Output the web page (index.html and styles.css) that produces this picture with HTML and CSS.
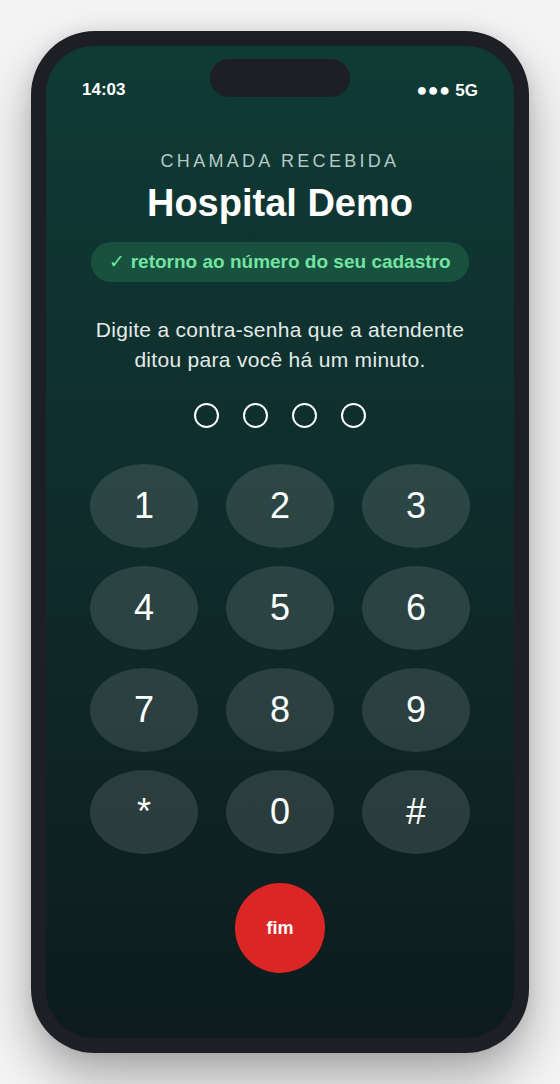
FILE: index.html
```html
<!DOCTYPE html>
<html lang="pt-BR">
<head>
<meta charset="UTF-8">
<meta name="viewport" content="width=device-width, initial-scale=1.0">
<title>Chamada recebida</title>
<link rel="stylesheet" href="styles.css">
</head>
<body>

<div class="phone">
  <div class="screen">
    <div class="island"></div>

    <div class="status-bar">
      <span class="clock">14:03</span>
      <span class="signal"><span class="signal-dots">&#9679;&#9679;&#9679;</span> 5G</span>
    </div>

    <div class="caller">
      <div class="caller-label">CHAMADA RECEBIDA</div>
      <h1 class="caller-name">Hospital Demo</h1>
      <div class="badge"><span class="check">&#10003;</span> retorno ao número do seu cadastro</div>
    </div>

    <p class="prompt">Digite a contra-senha que a atendente ditou para você há um minuto.</p>

    <div class="pin-dots">
      <span class="dot"></span>
      <span class="dot"></span>
      <span class="dot"></span>
      <span class="dot"></span>
    </div>

    <div class="keypad">
      <button class="key">1</button>
      <button class="key">2</button>
      <button class="key">3</button>
      <button class="key">4</button>
      <button class="key">5</button>
      <button class="key">6</button>
      <button class="key">7</button>
      <button class="key">8</button>
      <button class="key">9</button>
      <button class="key">*</button>
      <button class="key">0</button>
      <button class="key">#</button>
    </div>

    <button class="end-call">fim</button>
  </div>
</div>

</body>
</html>
```

FILE: styles.css
```css
html {
  background-color: #f4f4f4;
}

body {
  margin: 0;
  padding: 31px 0;
  background-color: #f4f4f4;
  font-family: "Liberation Sans", Arial, sans-serif;
}

.phone {
  width: 498px;
  height: 1022px;
  margin: 0 auto;
  padding: 15px;
  box-sizing: border-box;
  background-color: #1d1f24;
  border-radius: 64px;
  box-shadow: 0 24px 50px rgba(0, 0, 0, 0.32), 0 0 16px rgba(0, 0, 0, 0.08);
}

.screen {
  position: relative;
  height: 100%;
  border-radius: 48px;
  background: linear-gradient(180deg, #0f3b35 0%, #0f2d2c 45%, #0d1b1d 100%);
  color: #fff;
  overflow: hidden;
  display: flex;
  flex-direction: column;
  align-items: center;
}

.island {
  position: absolute;
  top: 13px;
  left: 164px;
  width: 140px;
  height: 38px;
  border-radius: 19px;
  background-color: #1d1f24;
}

.status-bar {
  align-self: stretch;
  display: flex;
  justify-content: space-between;
  padding: 34px 36px 0;
  font-size: 17px;
  line-height: 20px;
  font-weight: bold;
}

.signal-dots {
  font-size: 18px;
  letter-spacing: 0.5px;
}

.caller {
  margin-top: 49px;
  display: flex;
  flex-direction: column;
  align-items: center;
}

.caller-label {
  font-size: 18px;
  line-height: 22px;
  letter-spacing: 3.3px;
  color: #b7c9c5;
}

.caller-name {
  margin: 8px 0 0;
  font-size: 38px;
  line-height: 46px;
  font-weight: bold;
}

.badge {
  margin-top: 16px;
  height: 40px;
  line-height: 40px;
  padding: 0 18px;
  border-radius: 20px;
  background-color: #18513e;
  color: #72e3a0;
  font-size: 19px;
  font-weight: bold;
}

.check {
  font-weight: normal;
}

.prompt {
  margin: 33px 0 0;
  max-width: 390px;
  text-align: center;
  font-size: 21px;
  letter-spacing: 0.3px;
  line-height: 30px;
  color: #e3ebe9;
}

.pin-dots {
  margin-top: 28px;
  display: flex;
  gap: 24px;
}

.dot {
  width: 25px;
  height: 25px;
  box-sizing: border-box;
  border: 2.5px solid #fff;
  border-radius: 50%;
}

.keypad {
  margin-top: 36px;
  display: grid;
  grid-template-columns: repeat(3, 108px);
  grid-auto-rows: 84px;
  column-gap: 28px;
  row-gap: 18px;
}

.key {
  border: none;
  border-radius: 50%;
  background-color: rgba(255, 255, 255, 0.12);
  color: #fff;
  font-family: "Liberation Sans", Arial, sans-serif;
  font-size: 36px;
  padding: 0;
}

.end-call {
  margin-top: 29px;
  width: 90px;
  height: 90px;
  border: none;
  border-radius: 50%;
  background-color: #dc2626;
  color: #fff;
  font-family: "Liberation Sans", Arial, sans-serif;
  font-size: 18px;
  font-weight: bold;
  padding: 0;
}
```
